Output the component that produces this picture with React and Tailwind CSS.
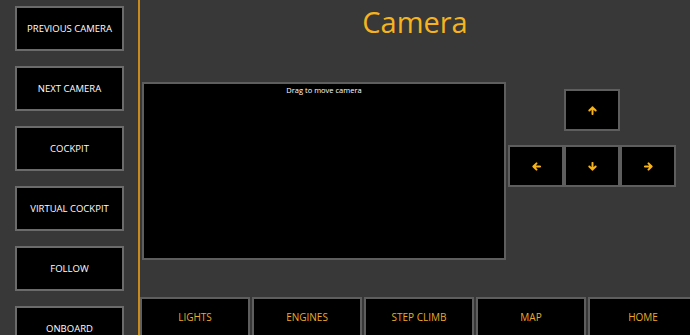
import React from 'react';

const sideButtons = ['PREVIOUS CAMERA', 'NEXT CAMERA', 'COCKPIT', 'VIRTUAL COCKPIT', 'FOLLOW', 'ONBOARD'];
const bottomButtons = ['LIGHTS', 'ENGINES', 'STEP CLIMB', 'MAP', 'HOME'];

const Arrow = ({ rotate = 0 }) => (
  <svg width="9" height="9" viewBox="0 0 10 10" style={{ transform: `rotate(${rotate}deg)` }}>
    <path d="M5 1.5 L8.5 5 M5 1.5 L1.5 5 M5 1.5 L5 9" stroke="#f5b41e" strokeWidth="2.2" fill="none" strokeLinecap="round" />
  </svg>
);

const ArrowButton = ({ rotate }) => (
  <button className="w-[56px] h-[42px] bg-black border-2 border-[#5e5e5e] flex items-center justify-center">
    <Arrow rotate={rotate} />
  </button>
);

export default function App() {
  return (
    <div
      className="w-[690px] h-[335px] bg-[#383838] flex overflow-hidden"
      style={{ fontFamily: '"Open Sans", "Liberation Sans", sans-serif' }}
    >
      {/* Sidebar */}
      <div className="w-[140px] shrink-0 border-r-2 border-[#c98a1e] pl-[15px] pt-[6px] flex flex-col gap-[15px]">
        {sideButtons.map(label => (
          <button
            key={label}
            className="w-[109px] h-[45px] shrink-0 bg-black border-2 border-[#6b6b6b] text-white text-[9.5px] pt-[1px] flex items-center justify-center"
          >
            {label}
          </button>
        ))}
      </div>

      {/* Main */}
      <div className="flex-1 flex flex-col min-w-0">
        <div className="h-[82px] shrink-0 flex justify-center">
          <h1 className="text-[29px] leading-none mt-[7px] text-[#f5b41e]">Camera</h1>
        </div>

        <div className="flex">
          <div className="ml-[2px] w-[364px] h-[178px] bg-black border-2 border-[#5e5e5e] flex justify-center">
            <span className="text-white text-[7.5px] mt-[1px]">Drag to move camera</span>
          </div>
          <div className="ml-[2px] pt-[7px] flex flex-col gap-[14px]">
            <div className="flex pl-[56px]">
              <ArrowButton rotate={0} />
            </div>
            <div className="flex">
              <ArrowButton rotate={-90} />
              <ArrowButton rotate={180} />
              <ArrowButton rotate={90} />
            </div>
          </div>
        </div>

        <div className="mt-[37px] flex gap-[2px]">
          {bottomButtons.map(label => (
            <button
              key={label}
              className="w-[110px] shrink-0 h-[40px] bg-black border-2 border-[#5e5e5e] text-[#eaaa2a] text-[10px] flex items-center justify-center"
            >
              {label}
            </button>
          ))}
        </div>
      </div>
    </div>
  );
}
